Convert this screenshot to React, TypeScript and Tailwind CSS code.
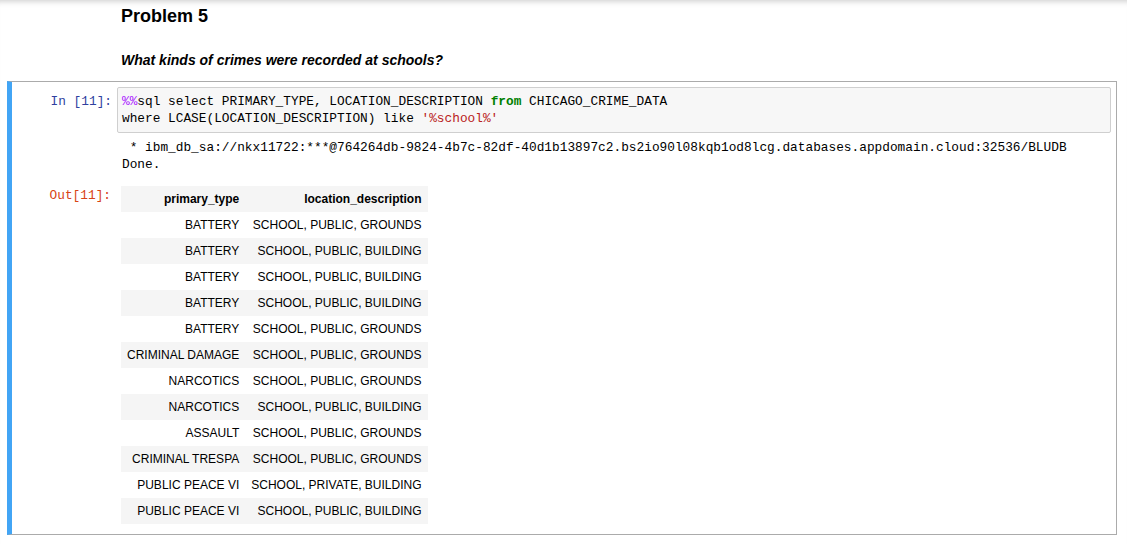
const ROWS: [string, string][] = [
  ["BATTERY", "SCHOOL, PUBLIC, GROUNDS"],
  ["BATTERY", "SCHOOL, PUBLIC, BUILDING"],
  ["BATTERY", "SCHOOL, PUBLIC, BUILDING"],
  ["BATTERY", "SCHOOL, PUBLIC, BUILDING"],
  ["BATTERY", "SCHOOL, PUBLIC, GROUNDS"],
  ["CRIMINAL DAMAGE", "SCHOOL, PUBLIC, GROUNDS"],
  ["NARCOTICS", "SCHOOL, PUBLIC, GROUNDS"],
  ["NARCOTICS", "SCHOOL, PUBLIC, BUILDING"],
  ["ASSAULT", "SCHOOL, PUBLIC, GROUNDS"],
  ["CRIMINAL TRESPA", "SCHOOL, PUBLIC, GROUNDS"],
  ["PUBLIC PEACE VI", "SCHOOL, PRIVATE, BUILDING"],
  ["PUBLIC PEACE VI", "SCHOOL, PUBLIC, BUILDING"],
];

const mono = "font-['Liberation_Mono','DejaVu_Sans_Mono',monospace] text-[12.8px] leading-[17px]";

export default function App() {
  return (
    <div className="min-h-screen bg-white text-black font-['Liberation_Sans',Arial,sans-serif] shadow-[inset_0_7px_6px_-6px_rgba(0,0,0,0.22)]">
      <div className="pl-[121px] pt-[5px]">
        <h2 className="text-[18px] leading-[22px] font-bold">Problem 5</h2>
        <p className="mt-[25px] text-[14px] leading-[17px] font-bold italic">
          What kinds of crimes were recorded at schools?
        </p>
      </div>

      <div className="mt-[12px] ml-[7px] mr-[10px] border border-[#ababab] border-l-[5px] border-l-[#42a5f5] p-[5px]">
        {/* input */}
        <div className="flex">
          <div className={`w-[100px] shrink-0 pr-[5px] pt-[6px] text-right text-[#303f9f] ${mono}`}>In [11]:</div>
          <div className={`flex-1 rounded-[2px] border border-[#cfcfcf] bg-[#f7f7f7] px-[4px] py-[5px] ${mono}`}>
            <div className="whitespace-pre">
              <span className="text-[#aa22ff]">%%</span>sql select PRIMARY_TYPE, LOCATION_DESCRIPTION{" "}
              <span className="font-bold text-[#008000]">from</span> CHICAGO_CRIME_DATA
            </div>
            <div className="whitespace-pre">
              where LCASE(LOCATION_DESCRIPTION) like <span className="text-[#ba2121]">'%school%'</span>
            </div>
          </div>
        </div>

        {/* stream output */}
        <div className="flex pt-[6px]">
          <div className="w-[100px] shrink-0" />
          <div className={`flex-1 pl-[5px] whitespace-pre ${mono}`}>
            <div> * ibm_db_sa://nkx11722:***@764264db-9824-4b7c-82df-40d1b13897c2.bs2io90l08kqb1od8lcg.databases.appdomain.cloud:32536/BLUDB</div>
            <div>Done.</div>
          </div>
        </div>

        {/* result */}
        <div className="flex pt-[13px] pb-[5px]">
          <div className={`w-[100px] shrink-0 pr-[6px] pt-[1px] text-right text-[#d84315] ${mono}`}>Out[11]:</div>
          <div className="flex-1 pl-[4px]">
            <table className="border-collapse text-[12px] leading-[14px]">
              <thead>
                <tr className="bg-[#f5f5f5]">
                  <th className="h-[26px] px-[6px] text-right font-bold">primary_type</th>
                  <th className="h-[26px] px-[6px] text-right font-bold">location_description</th>
                </tr>
              </thead>
              <tbody>
                {ROWS.map(([type, loc], i) => (
                  <tr key={i} className="even:bg-[#f5f5f5]">
                    <td className="h-[26px] px-[6px] text-right whitespace-nowrap">{type}</td>
                    <td className="h-[26px] px-[6px] text-right whitespace-nowrap">{loc}</td>
                  </tr>
                ))}
              </tbody>
            </table>
          </div>
        </div>
      </div>
    </div>
  );
}
